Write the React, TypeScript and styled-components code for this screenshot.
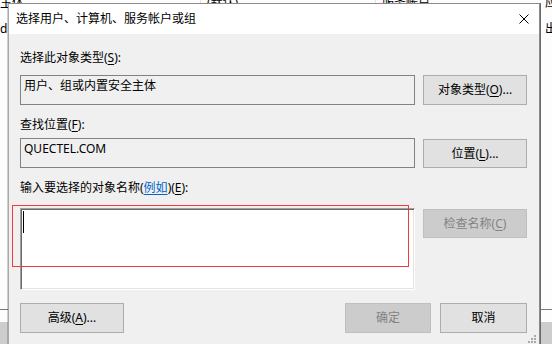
import React from "react";
import styled, { createGlobalStyle } from "styled-components";

const Global = createGlobalStyle`
  html, body { margin: 0; padding: 0; background: #fff; }
  body {
    font-family: "Noto Sans", "Noto Sans CJK SC", sans-serif;
    font-size: 12px;
    color: #000;
  }
  * { box-sizing: border-box; }
`;

const Desktop = styled.div`
  position: relative;
  width: 552px;
  height: 344px;
  overflow: hidden;
  background: #fff;
`;

/* ---------- window behind the dialog ---------- */
const BackWindow = styled.div`
  display: flex;
  flex-direction: column;
  height: 100%;
  background: #fdfdfd;
`;

const BackRow = styled.div<{ $top?: number }>`
  display: grid;
  grid-template-columns: 200px 175px 170px 1fr;
  height: 26px;
  line-height: 16px;
  margin-top: ${(p) => p.$top ?? 0}px;
  white-space: nowrap;
`;

const BackCell = styled.div<{ $shift?: number; $sep?: boolean }>`
  padding-left: ${(p) => p.$shift ?? 0}px;
  border-left: ${(p) => (p.$sep ? "1px solid #e3e3e3" : "none")};
  overflow: hidden;
`;

const BackSpacer = styled.div`
  flex: 1;
`;

const BackFooter = styled.div`
  height: 35px;
  border-top: 1px solid #7a7a7a;
  display: flex;
  flex-direction: column;
  justify-content: flex-end;
`;

const StatusBand = styled.div`
  height: 22px;
  background: #cdcdcd;
`;

/* ---------- dialog ---------- */
const Dialog = styled.div`
  position: absolute;
  left: 8px;
  top: 3px;
  width: 532px;
  height: 342px;
  border: 1px solid #8a8a8a;
  border-left-color: #a9a9a9;
  background: #f0f0f0;
  box-shadow: 1px 0 0 #6a6a6a, -1px 0 0 rgba(0, 0, 0, 0.18);
  display: flex;
  flex-direction: column;
`;

const TitleBar = styled.div`
  height: 30px;
  flex: none;
  background: #fff;
  display: flex;
  align-items: center;
  justify-content: space-between;
  padding-left: 7px;
  line-height: 16px;
`;

const CloseIcon = styled.svg`
  width: 10px;
  height: 10px;
  margin-right: 10px;
  display: block;
`;

const Body = styled.div`
  flex: 1;
  display: flex;
  flex-direction: column;
  padding: 16px 12px 0 11px;
`;

const Label = styled.div<{ $gap?: number }>`
  height: 16px;
  line-height: 16px;
  margin-top: ${(p) => p.$gap ?? 0}px;
  white-space: nowrap;
`;

const Mn = styled.span`
  text-decoration: underline;
  text-underline-offset: 2px;
  text-decoration-thickness: 1px;
`;

const Link = styled.span`
  color: #0066cc;
  text-decoration: underline;
  text-underline-offset: 2px;
`;

const FieldRow = styled.div<{ $gap: number; $height: number }>`
  display: grid;
  grid-template-columns: 395px 104px;
  column-gap: 8px;
  align-items: start;
  margin-top: ${(p) => p.$gap}px;
  height: ${(p) => p.$height}px;
`;

const ReadField = styled.div`
  height: 30px;
  border: 1px solid #828282;
  background: #f0f0f0;
  padding: 2px 3px;
  line-height: 16px;
  white-space: nowrap;
`;

const EntryBox = styled.div`
  height: 82px;
  background: #fff;
  border: 1px solid;
  border-color: #a0a0a0 #ffffff #ffffff #a0a0a0;
  box-shadow: inset 1px 1px 0 #696969, inset -1px -1px 0 #e3e3e3;
  padding: 1px;
`;

const Caret = styled.span`
  display: block;
  width: 1px;
  height: 22px;
  background: #000;
  margin: 1px 0 0 1px;
`;

const Button = styled.div<{ $disabled?: boolean; $width?: number; $offset?: number }>`
  width: ${(p) => (p.$width ? `${p.$width}px` : "auto")};
  height: ${(p) => 30 - (p.$offset ?? 0)}px;
  margin-top: ${(p) => p.$offset ?? 0}px;
  display: flex;
  align-items: center;
  justify-content: center;
  white-space: nowrap;
  line-height: 16px;
  background: ${(p) => (p.$disabled ? "#cccccc" : "#e1e1e1")};
  border: 1px solid ${(p) => (p.$disabled ? "#bfbfbf" : "#adadad")};
  color: ${(p) => (p.$disabled ? "#838383" : "#000")};
`;

const ButtonBar = styled.div`
  display: flex;
  align-items: center;
  margin-top: 13px;
  gap: 9px;
`;

const Push = styled.div`
  flex: 1;
`;

const Grip = styled.svg`
  position: absolute;
  right: 3px;
  bottom: 1px;
  width: 8px;
  height: 8px;
`;

const Annotation = styled.div`
  position: absolute;
  left: 12px;
  top: 205px;
  width: 397px;
  height: 62px;
  border: 1px solid #ef3b3b;
  pointer-events: none;
`;

export default function App() {
  return (
    <>
      <Global />
      <Desktop>
        <BackWindow>
          <BackRow $top={-5}>
            <BackCell>主体</BackCell>
            <BackCell $sep $shift={6}>(默认)</BackCell>
            <BackCell $sep $shift={6}>服务帐户</BackCell>
            <BackCell>应用</BackCell>
          </BackRow>
          <BackRow>
            <BackCell>da</BackCell>
            <BackCell $shift={7}></BackCell>
            <BackCell $shift={7}></BackCell>
            <BackCell>出</BackCell>
          </BackRow>
          <BackSpacer />
          <BackFooter>
            <StatusBand />
          </BackFooter>
        </BackWindow>

        <Dialog>
          <TitleBar>
            <span>选择用户、计算机、服务帐户或组</span>
            <CloseIcon viewBox="0 0 10 10">
              <path d="M0.5 0.5 L9.5 9.5 M9.5 0.5 L0.5 9.5" stroke="#000" strokeWidth="1" fill="none" />
            </CloseIcon>
          </TitleBar>
          <Body>
            <Label>
              选择此对象类型(<Mn>S</Mn>):
            </Label>
            <FieldRow $gap={9} $height={30}>
              <ReadField>用户、组或内置安全主体</ReadField>
              <Button>
                对象类型(<Mn>O</Mn>)...
              </Button>
            </FieldRow>

            <Label $gap={12}>
              查找位置(<Mn>F</Mn>):
            </Label>
            <FieldRow $gap={5} $height={30}>
              <ReadField>QUECTEL.COM</ReadField>
              <Button $offset={1}>
                位置(<Mn>L</Mn>)...
              </Button>
            </FieldRow>

            <Label $gap={12}>
              输入要选择的对象名称(<Link>例如</Link>)(<Mn>E</Mn>):
            </Label>
            <FieldRow $gap={12} $height={82}>
              <EntryBox>
                <Caret />
              </EntryBox>
              <Button $disabled $offset={1}>
                检查名称(<Mn>C</Mn>)
              </Button>
            </FieldRow>

            <ButtonBar>
              <Button $width={104}>
                高级(<Mn>A</Mn>)...
              </Button>
              <Push />
              <Button $disabled $width={86}>
                确定
              </Button>
              <Button $width={87}>取消</Button>
            </ButtonBar>
          </Body>
          <Grip viewBox="0 0 8 8">
            <g fill="#a8a8a8">
              <rect x="6" y="0" width="2" height="2" />
              <rect x="3" y="3" width="2" height="2" />
              <rect x="6" y="3" width="2" height="2" />
              <rect x="0" y="6" width="2" height="2" />
              <rect x="3" y="6" width="2" height="2" />
              <rect x="6" y="6" width="2" height="2" />
            </g>
          </Grip>
        </Dialog>
        <Annotation />
      </Desktop>
    </>
  );
}
